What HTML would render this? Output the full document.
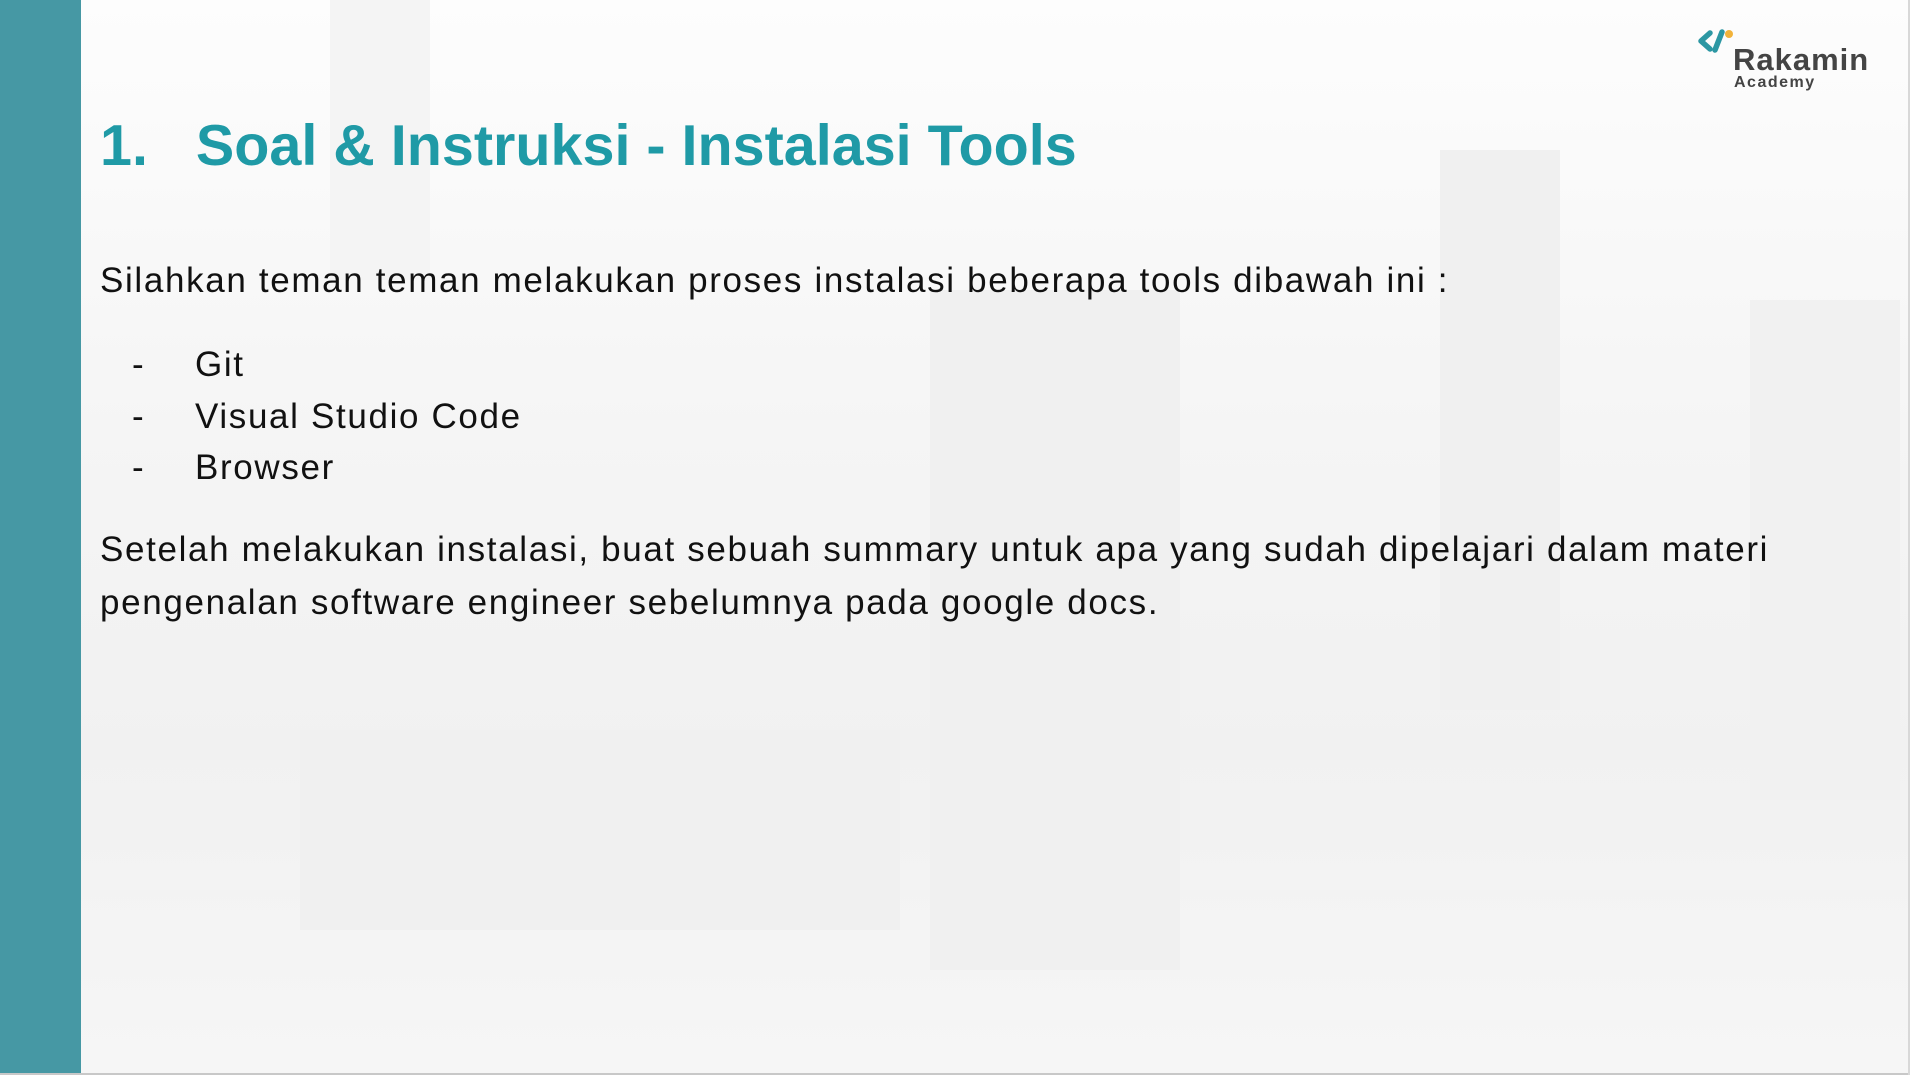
<!DOCTYPE html>
<html><head><meta charset="utf-8"><style>
html,body{margin:0;padding:0}
body{width:1910px;height:1075px;position:relative;overflow:hidden;background:#fafafa;font-family:"Liberation Sans",sans-serif}
.side{position:absolute;left:0;top:0;width:81px;height:1075px;background:#4698a4}
.bg{position:absolute;left:81px;top:0;width:1827px;height:1073px;background:linear-gradient(180deg,#fdfdfd 0%,#f5f5f5 40%,#f1f1f1 70%,#f6f6f6 100%)}
.b{position:absolute;background:#ececec}
.t{position:absolute;color:#111;white-space:nowrap;font-size:35px;letter-spacing:1.65px}
h1{position:absolute;left:100px;top:113px;margin:0;font-size:57.5px;font-weight:bold;color:#1f9aa6;white-space:nowrap;letter-spacing:0}
.bottom{position:absolute;left:0;top:1073px;width:1910px;height:2px;background:#c8c8c8}
.right{position:absolute;left:1908px;top:0;width:2px;height:1075px;background:#d8d8d8}
</style></head><body>
<div class="bg"></div>
<div class="b" style="left:930px;top:290px;width:250px;height:680px;background:#f0f0f0"></div>
<div class="b" style="left:1440px;top:150px;width:120px;height:560px;background:#f0f0f0"></div>
<div class="b" style="left:330px;top:0px;width:100px;height:280px;background:#f4f4f4"></div>
<div class="b" style="left:1750px;top:300px;width:150px;height:500px;background:#f1f1f1"></div>
<div class="b" style="left:300px;top:730px;width:600px;height:200px;background:#f0f0f0"></div>
<div class="side"></div>
<div class="bottom"></div><div class="right"></div>
<svg style="position:absolute;left:1696px;top:28px" width="44" height="34" viewBox="0 0 44 34">
<path d="M14 5 L5 13 L14 21" stroke="#2c97a3" stroke-width="5.5" fill="none" stroke-linecap="round" stroke-linejoin="round"/>
<path d="M26 4 L19 22" stroke="#2c97a3" stroke-width="5.5" stroke-linecap="round"/>
<circle cx="33" cy="6" r="4" fill="#f2b33a"/>
</svg>
<div class="t" style="left:1733px;top:42px;font-size:31px;font-weight:bold;color:#444;letter-spacing:1px">Rakamin</div>
<div class="t" style="left:1734px;top:74px;font-size:16px;font-weight:bold;color:#444;letter-spacing:1.5px">Academy</div>
<h1>1.&nbsp;&nbsp;&nbsp;Soal &amp; Instruksi - Instalasi Tools</h1>
<div class="t" style="left:100px;top:261px">Silahkan teman teman melakukan proses instalasi beberapa tools dibawah ini :</div>
<div class="t" style="left:132px;top:345px">-</div>
<div class="t" style="left:195px;top:345px">Git</div>
<div class="t" style="left:132px;top:397px">-</div>
<div class="t" style="left:195px;top:397px">Visual Studio Code</div>
<div class="t" style="left:132px;top:448px">-</div>
<div class="t" style="left:195px;top:448px">Browser</div>
<div class="t" style="left:100px;top:530px">Setelah melakukan instalasi, buat sebuah summary untuk apa yang sudah dipelajari dalam materi</div>
<div class="t" style="left:100px;top:583px">pengenalan software engineer sebelumnya pada google docs.</div>
</body></html>
